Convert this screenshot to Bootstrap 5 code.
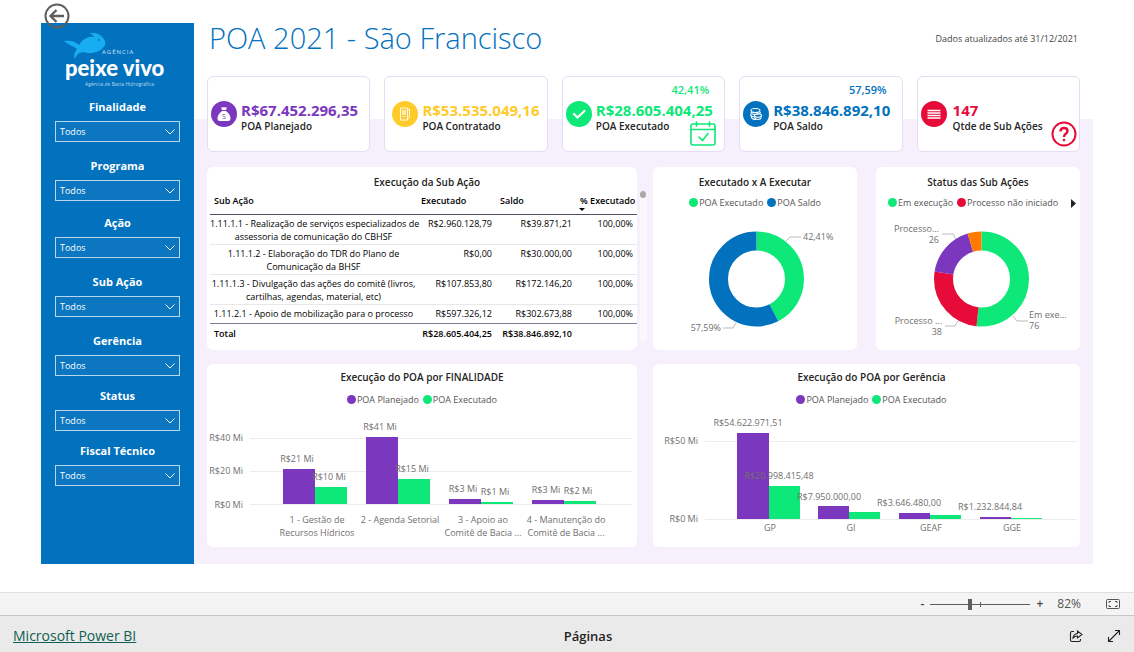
<!DOCTYPE html>
<html lang="pt-BR">
<head>
<meta charset="utf-8">
<meta name="viewport" content="width=device-width, initial-scale=1">
<title>POA 2021 - São Francisco</title>
<link href="https://cdn.jsdelivr.net/npm/bootstrap@5.3.0/dist/css/bootstrap.min.css" rel="stylesheet">
<style>
:root{--roxo:#7c37bf;--verde:#0de879;--azul:#0271be;--vermelho:#e60b38;--amarelo:#ffcb2b;--lilas:#f5f0fb}
body{font-family:"Open Sans","Noto Sans",sans-serif;font-size:9px;line-height:12px;color:#252423;background:#fff}
.report{margin:23px 41px 28px}
.side{flex:0 0 153px;background:var(--azul);padding:10px 14px 70px;color:#fff}
.logo{width:112px;height:56px;margin-left:8px;margin-bottom:8px}
.side label{font-size:11px;font-weight:700;line-height:20px;margin-bottom:4px;display:block;text-align:center}
.side .form-select{height:21px;padding:0 20px 0 4px;font-size:9px;line-height:20px;color:#fff;background-color:#0c76c1;border:1px solid #b8d7ee;border-radius:0;background-position:right 3px center;background-size:12px 12px;
--bs-form-select-bg-img:url("data:image/svg+xml,%3csvg xmlns='http://www.w3.org/2000/svg' viewBox='0 0 12 12'%3e%3cpath fill='none' stroke='%23fff' d='M1.5 3.5 6 8l4.500-4.500'/%3e%3c/svg%3e")}
.side option{color:#000}
.gap-l{margin-bottom:14px}.gap-m{margin-bottom:12px}.gap-s{margin-bottom:10px}
.back{top:3px;left:44px;width:26px;height:26px}
.board{padding:0 13px 17px;background:linear-gradient(#fff 96px,var(--lilas) 96px)}
h1{font-size:29px;font-weight:300;line-height:30px;color:var(--azul);margin:0 0 0 2px}
.updated{margin-right:2px;padding-top:10px;color:#444}
.head{height:53px}
.kpis{display:grid;grid-template-columns:repeat(5,1fr);gap:14px;margin-bottom:15px}
.kpi{height:76px;border:1px solid #e6dcf5;border-radius:6px;background:#fff;padding:5px 3px 0}
.pct{height:18px;font-size:11px;font-weight:600;line-height:16px;text-align:right;padding-right:12px}
.disc{width:26px;height:26px;flex:none;margin-top:1px}
.amount{font-size:15px;font-weight:700;line-height:20px;white-space:nowrap}
.caption-k{font-size:10px;font-weight:600;line-height:12px;white-space:nowrap}
.t-roxo{color:var(--roxo)}.t-amarelo{color:var(--amarelo)}.t-verde{color:var(--verde)}.t-azul{color:var(--azul)}.t-vermelho{color:var(--vermelho)}
.qty{gap:6px}
.corner{right:2px;bottom:4px}
.calendar{right:8px;bottom:5px}
.panels{display:grid;grid-template-columns:430fr 427fr;column-gap:16px;row-gap:14px}
.pair{display:grid;grid-template-columns:1fr 1fr;gap:19px}
.panel{background:#fff;border-radius:6px;height:183px;padding-top:7px}
.panel h2{font-size:10px;font-weight:600;line-height:16px;text-align:center;margin:0}
.panel .shift{padding-left:10px}
.legend-row{font-size:9px;line-height:14px;margin-top:6px;color:#555;gap:4px}
.wide{padding-top:5px}
.wide .legend-row{margin-top:8px}
.dot{display:inline-block;width:9px;height:9px;border-radius:50%;vertical-align:-1px;margin-right:1px}
.b-roxo{background:var(--roxo)}.b-verde{background:var(--verde)}.b-azul{background:var(--azul)}.b-vermelho{background:var(--vermelho)}
.panel svg.chart{display:block;width:100%;height:138px;margin-top:2px;font-size:9px;fill:#707070}
.grade{width:calc(100% - 3px);margin-left:3px;table-layout:fixed;color:#000;font-size:9px;line-height:13px}
.grade th,.grade td{padding:2px 4px 1px;vertical-align:top}
.grade th{font-weight:600}
.grade thead th{padding:4px 4px 6px;border-bottom:1px solid #4b5068;height:24px}
.grade .col-executado{width:79px}.grade .col-saldo{width:80px}.grade .col-pct{width:61px}
.grade tbody td{border-bottom:1px solid #e8e8e8;height:30px}
.grade tbody tr:last-child td{height:19px;border-bottom-color:#7a7f92}
.grade tbody td:first-child{text-align:center;white-space:nowrap;padding-left:0;padding-right:0}
.grade td+td,.grade tfoot th+th{text-align:right}
.grade tfoot th{padding-top:3px}
.sort{left:3px;bottom:3px;border:3px solid transparent;border-top-color:#000;border-bottom:0}
.track{right:-10px;top:24px;bottom:9px;width:7px;background:#faf8fd;border-radius:4px}
.track::before{content:"";display:block;width:6px;height:7px;border-radius:50%;background:#a8a8a8}
.zoombar{height:24px;background:#f4f4f4;border-top:1px solid #dfdfdf;border-bottom:1px solid #c6c6c6;padding-right:13px;color:#555;font-size:12px}
.plain{background:none;border:0;padding:0;line-height:1;color:#444;display:flex}
.sign{font-weight:600}
.zoom-value{margin-left:14px;margin-right:24px}
.zoom-range{width:100px;height:12px;margin:0 6px;appearance:none;background:linear-gradient(#605e5c,#605e5c) 50px 50%/1px 5px no-repeat,linear-gradient(#605e5c,#605e5c) 0 50%/100% 1px no-repeat}
.zoom-range::-webkit-slider-thumb{appearance:none;width:4px;height:11px;background:#605e5c}
.foot{height:36px;background:#eaeaea;padding:4px 13px 0;display:grid;grid-template-columns:1fr auto 1fr}
.foot a{color:#115e53;font-size:14px;line-height:16px;display:inline-block}
.pages{font-size:13px;padding-left:42px}
</style>
</head>
<body class="d-flex flex-column min-vh-100">
<main class="flex-grow-1 position-relative">
  <button class="plain back position-absolute" aria-label="Voltar"><svg width="26" height="26" viewBox="0 0 26 26" fill="none" stroke="#605e5c" stroke-width="2"><circle cx="13" cy="13" r="11.500"/><path d="M20 13H7M12.500 7 6.500 13l6 6" stroke-width="2.400"/></svg></button>
  <div class="report d-flex">
    <aside class="side">
      <svg class="logo d-block" viewBox="0 0 112 56" role="img" aria-label="Agência Peixe Vivo">
        <path fill="#18adf0" d="M1 8c6-1 11 0 15 4 4-6 9-9 15-8-1-2-2-3-5-4 8-1 12 2 14 5 2 2 3 5 2 7-4 7-13 10-22 7-4 1-6 2-8 7-2-4 0-7 2-10C11 13 5 12 1 8z"/><circle cx="36" cy="7" r="1" fill="#0271be"/>
        <text x="39" y="21" font-size="6" letter-spacing="1" fill="#cfe5f5">AGÊNCIA</text>
        <text x="2" y="43" font-size="22" font-weight="900" font-family="Lato" fill="#fff">peixe vivo</text>
        <text x="22" y="53" font-size="5" fill="#b9d8ee">Agência de Bacia Hidrográfica</text>
      </svg>
      <div class="gap-l"><label for="f1">Finalidade</label><select class="form-select" id="f1"><option>Todos</option></select></div>
      <div class="gap-m"><label for="f2">Programa</label><select class="form-select" id="f2"><option>Todos</option></select></div>
      <div class="gap-l"><label for="f3">Ação</label><select class="form-select" id="f3"><option>Todos</option></select></div>
      <div class="gap-l"><label for="f4">Sub Ação</label><select class="form-select" id="f4"><option>Todos</option></select></div>
      <div class="gap-s"><label for="f5">Gerência</label><select class="form-select" id="f5"><option>Todos</option></select></div>
      <div class="gap-s"><label for="f6">Status</label><select class="form-select" id="f6"><option>Todos</option></select></div>
      <div><label for="f7">Fiscal Técnico</label><select class="form-select" id="f7"><option>Todos</option></select></div>
    </aside>
    <section class="board flex-grow-1">
      <div class="head d-flex justify-content-between">
        <h1>POA 2021 - São Francisco</h1>
        <div class="updated">Dados atualizados até 31/12/2021</div>
      </div>
      <div class="kpis">
        <div class="kpi"><div class="pct"></div><div class="d-flex gap-1">
          <svg class="disc" viewBox="0 0 26 26"><circle cx="13" cy="13" r="13" fill="#7c37bf"/><path fill="#fff" d="M10 6q1 1 2 0 1 1 2 0 1 1 2 0l-1 3h-4zM11 10h4q5 4 4.500 8 0 2-2.500 2H9q-2.500 0-2.500-2Q6 14 11 10z"/><text x="13" y="18" font-size="7" text-anchor="middle" fill="#7c37bf">S</text></svg>
          <div><div class="amount t-roxo">R$67.452.296,35</div><div class="caption-k">POA Planejado</div></div></div></div>
        <div class="kpi"><div class="pct"></div><div class="d-flex gap-1 ps-1">
          <svg class="disc" viewBox="0 0 26 26"><circle cx="13" cy="13" r="13" fill="#ffcb2b"/><g fill="none" stroke="#fff" stroke-width=".9"><path d="M8.500 7h7v12h-7zM15.500 9l2-1v8l-2 2"/></g><path fill="#fff" opacity=".6" d="M10 9h4v5h-4zM10 15h4v1h-4z"/></svg>
          <div><div class="amount t-amarelo">R$53.535.049,16</div><div class="caption-k">POA Contratado</div></div></div></div>
        <div class="kpi position-relative"><div class="pct t-verde">42,41%</div><div class="d-flex gap-1">
          <svg class="disc" viewBox="0 0 26 26"><circle cx="13" cy="13" r="13" fill="#0de879"/><path d="M8 13l3.500 3.500L18.500 10" fill="none" stroke="#fff" stroke-width="2.200" stroke-linecap="round"/></svg>
          <div><div class="amount t-verde">R$28.605.404,25</div><div class="caption-k">POA Executado</div></div></div>
          <svg class="calendar position-absolute" width="26" height="25" viewBox="0 0 26 25" fill="none" stroke="#0de879" stroke-width="1.600" stroke-linecap="round"><rect x="1" y="3" width="24" height="21" rx="2"/><path d="M1 8.500h24M6.500 1v4M19.500 1v4M9 16l3.500 3.500L18 12.500"/></svg></div>
        <div class="kpi"><div class="pct t-azul">57,59%</div><div class="d-flex gap-1">
          <svg class="disc" viewBox="0 0 26 26"><circle cx="13" cy="13" r="13" fill="#0271be"/><g fill="none" stroke="#fff" stroke-width="1.100"><ellipse cx="12.500" cy="9.500" rx="4.500" ry="2"/><path d="M8 11q0 2.500 4.500 2.500T17.500 11M7.500 13q0 3 5 3M8 15.500q1 3 5 3"/><ellipse cx="15" cy="14.500" rx="3.500" ry="1.800"/><path d="M11.500 16.500q1 2 3.500 2t3.500-2"/></g></svg>
          <div><div class="amount t-azul">R$38.846.892,10</div><div class="caption-k">POA Saldo</div></div></div></div>
        <div class="kpi position-relative"><div class="pct"></div><div class="d-flex qty">
          <svg class="disc" viewBox="0 0 26 26"><circle cx="13" cy="13" r="13" fill="#e60b38"/><path d="M6.500 9.500h13M6.500 12h13M6.500 14.500h13M6.500 17h13" stroke="#fff" stroke-width="1.300"/></svg>
          <div><div class="amount t-vermelho">147</div><div class="caption-k">Qtde de Sub Ações</div></div></div>
          <svg class="corner position-absolute" width="26" height="26" viewBox="0 0 26 26" fill="none" stroke="#e60b38"><circle cx="13" cy="13" r="11.500" stroke-width="2"/><path d="M9.500 10.500Q9.500 7 13 7t3.500 3q0 1.500-1.700 2.800T13 16" stroke-width="2.400"/><path d="M13 17.800v2.400" stroke-width="2.400"/></svg></div>
      </div>
      <div class="panels">
        <div class="panel position-relative">
          <h2 class="shift">Execução da Sub Ação</h2>
          <table class="grade">
            <colgroup><col><col class="col-executado"><col class="col-saldo"><col class="col-pct"></colgroup>
            <thead><tr><th>Sub Ação</th><th>Executado</th><th>Saldo</th><th class="position-relative text-end text-nowrap">% Executado<span class="sort position-absolute"></span></th></tr></thead>
            <tbody>
              <tr><td>1.11.1.1 - Realização de serviços especializados de<br>assessoria de comunicação do CBHSF</td><td>R$2.960.128,79</td><td>R$39.871,21</td><td>100,00%</td></tr>
              <tr><td>1.11.1.2 - Elaboração do TDR do Plano de<br>Comunicação da BHSF</td><td>R$0,00</td><td>R$30.000,00</td><td>100,00%</td></tr>
              <tr><td>1.11.1.3 - Divulgação das ações do comitê (livros,<br>cartilhas, agendas, material, etc)</td><td>R$107.853,80</td><td>R$172.146,20</td><td>100,00%</td></tr>
              <tr><td>1.11.2.1 - Apoio de mobilização para o processo</td><td>R$597.326,12</td><td>R$302.673,88</td><td>100,00%</td></tr>
            </tbody>
            <tfoot><tr><th>Total</th><th>R$28.605.404,25</th><th>R$38.846.892,10</th><th></th></tr></tfoot>
          </table>
          <div class="track position-absolute"></div>
        </div>
        <div class="pair">
          <div class="panel">
            <h2>Executado x A Executar</h2>
            <div class="legend-row d-flex justify-content-center"><span><i class="dot b-verde"></i>POA Executado</span><span><i class="dot b-azul"></i>POA Saldo</span></div>
            <svg class="chart" viewBox="0 0 204 138">
              <g fill="none" stroke-width="19" transform="rotate(-90 103.500 67)"><circle cx="103.500" cy="67" r="38" stroke="#0de879" pathLength="10000" stroke-dasharray="4241 5759"/><circle cx="103.500" cy="67" r="38" stroke="#0271be" pathLength="10000" stroke-dasharray="5759 4241" stroke-dashoffset="-4241"/></g>
              <path d="M133 29l4-4h11M83 111l-3 5H70" fill="none" stroke="#bbb"/>
              <text x="150" y="28">42,41%</text><text x="68" y="119" text-anchor="end">57,59%</text>
            </svg>
          </div>
          <div class="panel">
            <h2>Status das Sub Ações</h2>
            <div class="legend-row d-flex ps-2"><span class="ms-1"><i class="dot b-verde"></i>Em execução</span><span><i class="dot b-vermelho"></i>Processo não iniciado</span><button class="plain ms-auto me-1 align-self-center" aria-label="Próximo"><svg width="5" height="9" viewBox="0 0 5 9"><path d="M0 0l5 4.500L0 9z" fill="#222"/></svg></button></div>
            <svg class="chart" viewBox="0 0 204 138">
              <g fill="none" stroke-width="19" transform="rotate(-90 105.500 67)"><circle cx="105.500" cy="67" r="38" stroke="#0de879" pathLength="147" stroke-dasharray="76 71"/><circle cx="105.500" cy="67" r="38" stroke="#e60b38" pathLength="147" stroke-dasharray="38 109" stroke-dashoffset="-76"/><circle cx="105.500" cy="67" r="38" stroke="#7c37bf" pathLength="147" stroke-dasharray="26 121" stroke-dashoffset="-114"/><circle cx="105.500" cy="67" r="38" stroke="#ff7a00" pathLength="147" stroke-dasharray="7 140" stroke-dashoffset="-140"/></g>
              <path d="M66 22h11l3 5M69 114h10l3-5M137 104l4 5h11" fill="none" stroke="#bbb"/>
              <text x="63" y="20" text-anchor="end">Processo...</text><text x="63" y="31" text-anchor="end">26</text>
              <text x="66" y="112" text-anchor="end">Processo ...</text><text x="66" y="123" text-anchor="end">38</text>
              <text x="153" y="106">Em exe...</text><text x="153" y="117">76</text>
            </svg>
          </div>
        </div>
        <div class="panel wide">
          <h2>Execução do POA por FINALIDADE</h2>
          <div class="legend-row d-flex justify-content-center"><span><i class="dot b-roxo"></i>POA Planejado</span><span><i class="dot b-verde"></i>POA Executado</span></div>
          <svg class="chart" viewBox="0 0 430 138">
            <path d="M43 29.500h382M43 62.500h382M43 95.500h382" stroke="#ececec"/>
            <path fill="#7c37bf" d="M76 60h32v35H76zM159 28h32v67h-32zM242 90h32v5h-32zM325 91h32v4h-32z"/>
            <path fill="#0de879" d="M108 78h32v17h-32zM191 70h32v25h-32zM274 93h32v2h-32zM357 92h32v3h-32z"/>
            <g text-anchor="end"><text x="36" y="32">R$40 Mi</text><text x="36" y="65">R$20 Mi</text><text x="36" y="99">R$0 Mi</text></g>
            <g text-anchor="middle"><text x="90" y="53">R$21 Mi</text><text x="122" y="71">R$10 Mi</text><text x="173" y="21">R$41 Mi</text><text x="205" y="63">R$15 Mi</text><text x="256" y="83">R$3 Mi</text><text x="288" y="86">R$1 Mi</text><text x="339" y="84">R$3 Mi</text><text x="371" y="85">R$2 Mi</text>
            <text x="110" y="114">1 - Gestão de</text><text x="110" y="127">Recursos Hídricos</text><text x="193" y="114">2 - Agenda Setorial</text><text x="276" y="114">3 - Apoio ao</text><text x="276" y="127">Comitê de Bacia ...</text><text x="359" y="114">4 - Manutenção do</text><text x="359" y="127">Comitê de Bacia ...</text></g>
          </svg>
        </div>
        <div class="panel wide">
          <h2 class="shift">Execução do POA por Gerência</h2>
          <div class="legend-row shift d-flex justify-content-center"><span><i class="dot b-roxo"></i>POA Planejado</span><span><i class="dot b-verde"></i>POA Executado</span></div>
          <svg class="chart" viewBox="0 0 427 138">
            <path d="M52 32.500h372M52 110.500h372" stroke="#ececec"/>
            <path fill="#7c37bf" d="M84 24h32v86H84zM165 97h31v13h-31zM246 104h31v6h-31zM327 108h31v2h-31z"/>
            <path fill="#0de879" d="M116 77h31v33h-31zM196 103h31v7h-31zM277 106h31v4h-31zM358 109h31v1h-31z"/>
            <g text-anchor="end"><text x="45" y="35">R$50 Mi</text><text x="45" y="113">R$0 Mi</text></g>
            <g text-anchor="middle"><text x="95" y="17">R$54.622.971,51</text><text x="126" y="70">R$20.998.415,48</text><text x="176" y="91">R$7.950.000,00</text><text x="256" y="97">R$3.646.480,00</text><text x="337" y="101">R$1.232.844,84</text>
            <text x="117" y="122">GP</text><text x="198" y="122">GI</text><text x="278" y="122">GEAF</text><text x="359" y="122">GGE</text></g>
          </svg>
        </div>
      </div>
    </section>
  </div>
</main>
<div class="zoombar d-flex align-items-center justify-content-end">
  <button class="plain sign" aria-label="Reduzir">-</button><input class="zoom-range" type="range" min="0" max="100" value="39" aria-label="Zoom"><button class="plain sign" aria-label="Ampliar">+</button>
  <span class="zoom-value">82%</span>
  <button class="plain" aria-label="Ajustar à página"><svg width="16" height="12" viewBox="0 0 16 12" fill="none" stroke="#555"><rect x="1.500" y="1.500" width="13" height="9" rx="1"/><path d="M4 5V3.500h2M10 3.500h2V5M12 7v1.500h-2M6 8.500H4V7"/></svg></button>
</div>
<footer class="foot align-items-center">
  <div class="d-flex"><a href="#">Microsoft Power BI</a></div>
  <div class="pages fw-semibold">Páginas</div>
  <div class="d-flex justify-content-end gap-4 align-items-center">
    <button class="plain" aria-label="Compartilhar"><svg width="14" height="14" viewBox="0 0 14 14" fill="none" stroke="#222" stroke-width="1.100"><path d="M5 2.500H3q-1.500 0-1.500 1.500v7q0 1.500 1.500 1.500h7q1.500 0 1.500-1.500v-1"/><path d="M4 9q.5-4 4.500-4.500V2L13 5.500 8.500 9V7Q6 7 4 9z"/></svg></button>
    <button class="plain" aria-label="Tela cheia"><svg width="14" height="14" viewBox="0 0 14 14" fill="none" stroke="#222" stroke-width="1.100"><path d="M1.500 12.500l11-11M8 1.500h4.500V6M6 12.500H1.500V8"/></svg></button>
  </div>
</footer>
<script src="https://cdn.jsdelivr.net/npm/bootstrap@5.3.0/dist/js/bootstrap.bundle.min.js"></script>
</body>
</html>
